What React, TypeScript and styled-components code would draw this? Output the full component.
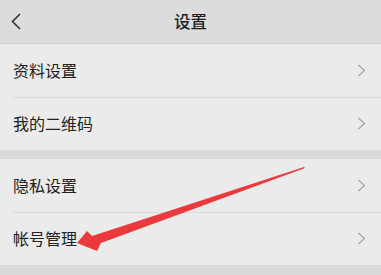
import styled, { createGlobalStyle } from 'styled-components'

const GlobalStyle = createGlobalStyle`
  html, body {
    margin: 0;
    padding: 0;
    background-color: #dadada;
    font-family: "Noto Sans CJK SC", "Noto Sans", sans-serif;
  }
`

const groups = [
  ['资料设置', '我的二维码'],
  ['隐私设置', '帐号管理'],
]

const App = () => {
  return (
    <Page>
      <GlobalStyle />
      <Header>
        <BackButton aria-label="返回">
          <svg width="12" height="17" viewBox="0 0 12 17">
            <path d="M10 1 L2.5 8.5 L10 16" fill="none" stroke="#333" strokeWidth="1.6" />
          </svg>
        </BackButton>
        <Title>设置</Title>
      </Header>
      {groups.map((items, gi) => (
        <Group key={gi}>
          {items.map((label, i) => (
            <Row key={label} divided={i > 0}>
              <Label>{label}</Label>
              <svg width="9" height="13" viewBox="0 0 9 13">
                <path d="M1.5 1 L7.5 6.5 L1.5 12" fill="none" stroke="#a3a3a3" strokeWidth="1.2" />
              </svg>
            </Row>
          ))}
        </Group>
      ))}
      <Annotation width="381" height="275" viewBox="0 0 381 275">
        <polygon
          points="304,167 305,168 101,243 97,251 77,243 87,231 92,236"
          fill="#ea3a3d"
        />
      </Annotation>
    </Page>
  )
}

const Page = styled.div`
  position: relative;
  width: 381px;
  height: 275px;
  overflow: hidden;
  background-color: #dadada;
`
const Header = styled.header`
  position: relative;
  display: flex;
  align-items: center;
  justify-content: center;
  height: 43px;
  background-color: #dcdcdc;
  border-bottom: 1px solid #d0d0d0;
`
const BackButton = styled.button`
  position: absolute;
  left: 10px;
  top: 13px;
  padding: 0;
  border: none;
  background: none;
  display: flex;
`
const Title = styled.h1`
  margin: 0 0 2px 0;
  font-size: 16.5px;
  font-weight: 500;
  color: #1e1e1e;
`
const Group = styled.section`
  background-color: #ebebeb;
  margin-bottom: 9px;
`
const Row = styled.div<{ divided: boolean }>`
  position: relative;
  display: flex;
  align-items: center;
  justify-content: space-between;
  height: 53px;
  padding: 0 15px 0 13px;

  &::before {
    content: '';
    display: ${({ divided }) => (divided ? 'block' : 'none')};
    position: absolute;
    top: 0;
    left: 13px;
    right: 0;
    height: 1px;
    background-color: #d9d9d9;
  }
`
const Label = styled.span`
  font-size: 16px;
  color: #222;
  margin-bottom: 1px;
`
const Annotation = styled.svg`
  position: absolute;
  left: 0;
  top: 0;
  pointer-events: none;
`

export default App
